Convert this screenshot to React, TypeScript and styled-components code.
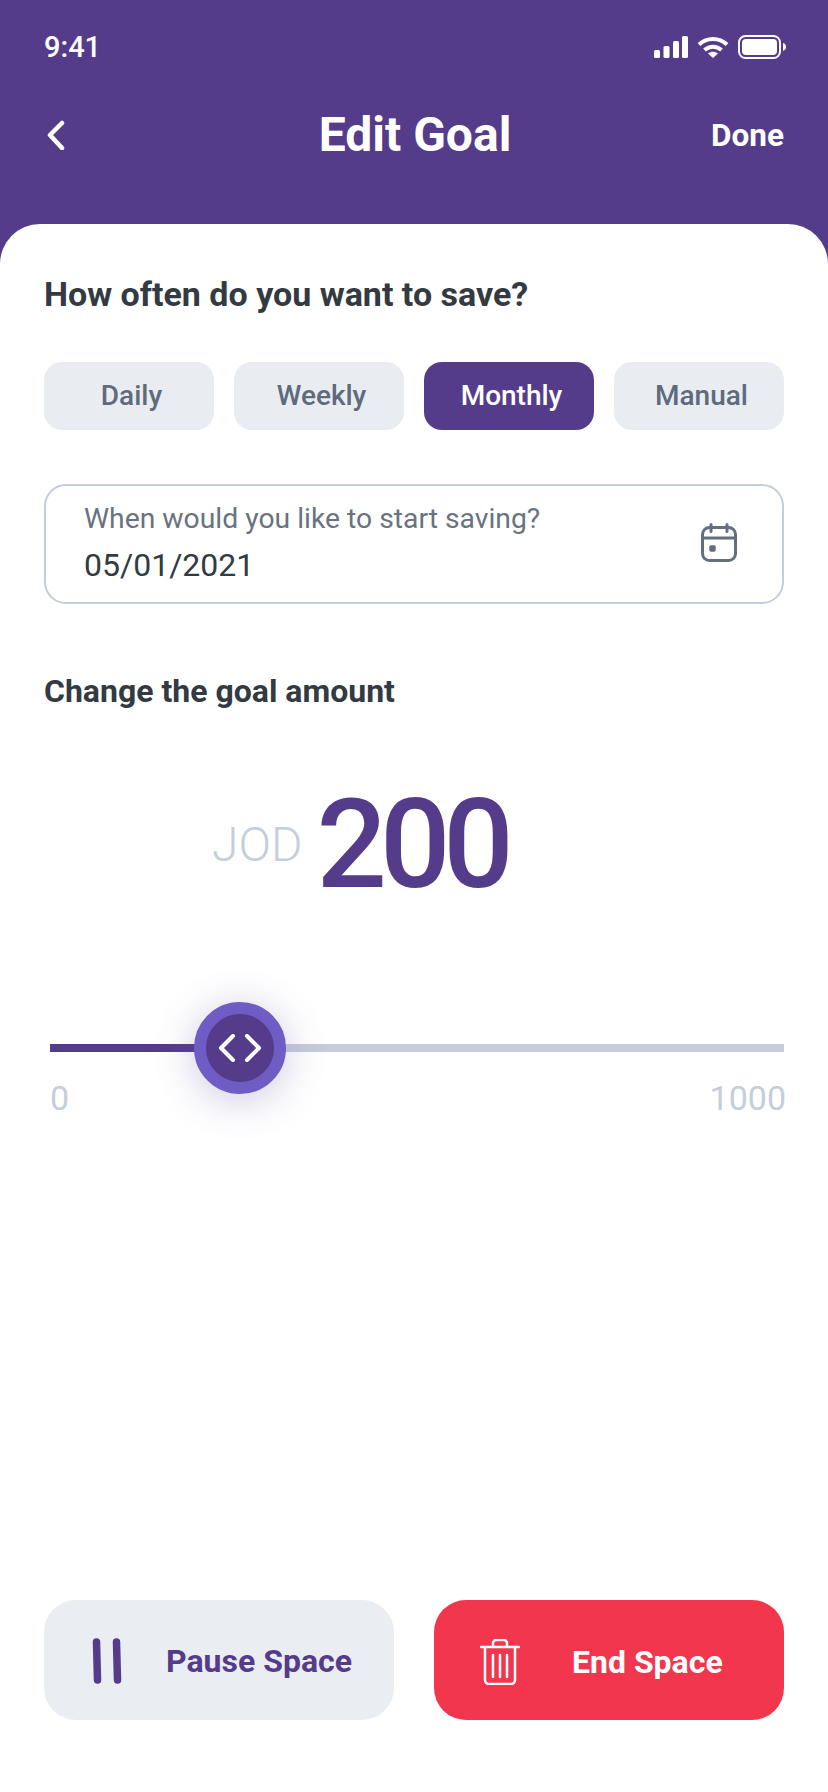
import React from 'react';
import styled, { createGlobalStyle } from 'styled-components';

const GlobalStyle = createGlobalStyle`
  html, body {
    margin: 0;
    padding: 0;
    background: #ffffff;
    font-family: 'Roboto', 'Liberation Sans', sans-serif;
  }
  * { box-sizing: border-box; }
`;

const purple = '#553c8b';

const Page = styled.div`
  width: 828px;
  height: 1792px;
  display: flex;
  flex-direction: column;
  background: ${purple};
  overflow: hidden;
`;

const Header = styled.header`
  height: 224px;
  flex: none;
  padding: 0 44px;
  color: #ffffff;
`;

const StatusBar = styled.div`
  height: 105px;
  padding-top: 28px;
  display: flex;
  justify-content: space-between;
  align-items: flex-start;
`;

const Clock = styled.span`
  font-size: 29px;
  line-height: 38px;
  font-weight: 500;
`;

const StatusIcons = styled.div`
  display: flex;
  align-items: center;
  gap: 9px;
  margin-top: 7px;
  margin-right: -2px;
`;

const NavBar = styled.div`
  display: grid;
  grid-template-columns: 1fr auto 1fr;
  align-items: center;
  height: 60px;
`;

const BackButton = styled.button`
  border: none;
  background: none;
  padding: 0 0 0 2px;
  display: flex;
  justify-self: start;
`;

const Title = styled.h1`
  margin: 0;
  padding-left: 2px;
  font-size: 48px;
  font-weight: 700;
  line-height: 60px;
`;

const DoneButton = styled.button`
  border: none;
  background: none;
  padding: 0;
  color: #ffffff;
  font: 700 31.5px/40px 'Roboto', sans-serif;
  justify-self: end;
  margin-top: 2px;
`;

const Card = styled.main`
  flex: 1;
  background: #ffffff;
  border-radius: 40px 40px 0 0;
  padding: 50px 44px 72px;
  display: flex;
  flex-direction: column;
`;

const SectionTitle = styled.h2`
  margin: 0;
  font-size: 34px;
  line-height: 40px;
  font-weight: 700;
  color: #333a42;
`;

const Pills = styled.div`
  display: grid;
  grid-template-columns: repeat(4, 170px);
  gap: 20px;
  margin-top: 48px;
`;

const Pill = styled.button<{ $active?: boolean }>`
  height: 68px;
  border: none;
  border-radius: 18px;
  padding: 0 0 0 5px;
  font: 500 28px/36px 'Roboto', sans-serif;
  background: ${({ $active }) => ($active ? purple : '#e9edf1')};
  color: ${({ $active }) => ($active ? '#ffffff' : '#606a7d')};
`;

const DateField = styled.div`
  height: 120px;
  margin-top: 54px;
  border: 2px solid #c5cddc;
  border-radius: 22px;
  padding: 0 45px 2px 38px;
  display: flex;
  align-items: center;
  justify-content: space-between;
`;

const DateText = styled.div`
  display: flex;
  flex-direction: column;
  gap: 8px;
`;

const DateLabel = styled.span`
  font-size: 28.3px;
  line-height: 36px;
  color: #69727f;
`;

const DateValue = styled.span`
  font-size: 32px;
  line-height: 40px;
  color: #333a42;
`;

const AmountTitle = styled(SectionTitle)`
  margin-top: 67px;
  font-size: 32px;
`;

const Amount = styled.div`
  display: flex;
  align-items: center;
  gap: 14px;
  margin-top: 64px;
  padding-left: 168px;
`;

const Currency = styled.span`
  font-size: 48px;
  line-height: 60px;
  font-weight: 300;
  color: #c5cddc;
`;

const Value = styled.span`
  font-size: 124px;
  line-height: 140px;
  font-weight: 500;
  letter-spacing: -7px;
  color: ${purple};
`;

const Slider = styled.div`
  margin-top: 129px;
  padding-left: 6px;
`;

const Track = styled.div`
  position: relative;
  height: 8px;
  background: #c5cddc;
`;

const TrackFill = styled.div`
  height: 100%;
  background: ${purple};
`;

const Thumb = styled.div`
  position: absolute;
  top: 50%;
  width: 92px;
  height: 92px;
  margin: -46px 0 0 -46px;
  border-radius: 50%;
  background: ${purple};
  border: 12px solid #6f5cc4;
  box-shadow: 0 6px 40px rgba(96, 88, 160, 0.32);
  display: flex;
  align-items: center;
  justify-content: center;
`;

const SliderLabels = styled.div`
  display: flex;
  justify-content: space-between;
  margin: 26px -2px 0 0;
  font-size: 34px;
  line-height: 40px;
  color: #c5cddc;
`;

const Actions = styled.div`
  margin-top: auto;
  display: grid;
  grid-template-columns: 350px 350px;
  gap: 40px;
`;

const ActionButton = styled.button<{ $danger?: boolean }>`
  height: 120px;
  border: none;
  border-radius: 32px;
  display: flex;
  align-items: center;
  padding: ${({ $danger }) => ($danger ? '4px 0 0 46px' : '2px 0 0 48px')};
  gap: ${({ $danger }) => ($danger ? 52 : 44)}px;
  background: ${({ $danger }) => ($danger ? '#f2364e' : '#eaedf1')};
  color: ${({ $danger }) => ($danger ? '#ffffff' : purple)};
  font: 700 32px/40px 'Roboto', sans-serif;
`;

const thumbPosition = 190;

export default function App() {
  return (
    <Page>
      <GlobalStyle />
      <Header>
        <StatusBar>
          <Clock>9:41</Clock>
          <StatusIcons>
            <svg width="34" height="24" viewBox="0 0 34 24" fill="#fff">
              <rect x="0" y="15" width="6" height="8" rx="1.5" />
              <rect x="9.500" y="11" width="6" height="12" rx="1.5" />
              <rect x="19" y="6" width="6" height="17" rx="1.5" />
              <rect x="28" y="1" width="6" height="22" rx="1.5" />
            </svg>
            <svg width="32" height="24" viewBox="0 0 32 24" fill="none" stroke="#fff" strokeWidth="4">
              <path d="M2 9.500C10 2 22 2 30 9.500" />
              <path d="M7.500 15C12.500 10.500 19.500 10.500 24.500 15" />
              <path d="M11 18.500L16 23l5-4.500C18 16 14 16 11 18.500Z" fill="#fff" stroke="none" />
            </svg>
            <svg width="48" height="24" viewBox="0 0 48 24">
              <rect x="1" y="1" width="41" height="22" rx="6.5" fill="none" stroke="#fff" strokeWidth="2" />
              <rect x="4" y="4" width="35" height="16" rx="4" fill="#fff" />
              <path d="M45 8c2 .6 3 2.200 3 4s-1 3.400-3 4Z" fill="#fff" />
            </svg>
          </StatusIcons>
        </StatusBar>
        <NavBar>
          <BackButton>
            <svg width="20" height="30" viewBox="0 0 20 30" fill="none" stroke="#fff" strokeWidth="4.500" strokeLinecap="round" strokeLinejoin="round">
              <path d="M16 3L4 15l12 13" />
            </svg>
          </BackButton>
          <Title>Edit Goal</Title>
          <DoneButton>Done</DoneButton>
        </NavBar>
      </Header>
      <Card>
        <SectionTitle>How often do you want to save?</SectionTitle>
        <Pills>
          <Pill>Daily</Pill>
          <Pill>Weekly</Pill>
          <Pill $active>Monthly</Pill>
          <Pill>Manual</Pill>
        </Pills>
        <DateField>
          <DateText>
            <DateLabel>When would you like to start saving?</DateLabel>
            <DateValue>05/01/2021</DateValue>
          </DateText>
          <svg width="36" height="40" viewBox="0 0 36 40" fill="none" stroke="#646e7f" strokeWidth="3" strokeLinecap="round">
            <rect x="1.500" y="4.500" width="33" height="33" rx="7" />
            <path d="M1.500 15h33M10 1.500v7M26 1.500v7" />
            <rect x="9" y="23" width="5" height="5" rx="1" fill="#646e7f" strokeWidth="1.500" />
          </svg>
        </DateField>
        <AmountTitle>Change the goal amount</AmountTitle>
        <Amount>
          <Currency>JOD</Currency>
          <Value>200</Value>
        </Amount>
        <Slider>
          <Track>
            <TrackFill style={{ width: thumbPosition }} />
            <Thumb style={{ left: thumbPosition }}>
              <svg width="42" height="28" viewBox="0 0 42 28" fill="none" stroke="#fff" strokeWidth="4" strokeLinecap="round" strokeLinejoin="round">
                <path d="M14 2L2 14l12 12M28 2l12 12-12 12" />
              </svg>
            </Thumb>
          </Track>
          <SliderLabels>
            <span>0</span>
            <span>1000</span>
          </SliderLabels>
        </Slider>
        <Actions>
          <ActionButton>
            <svg width="30" height="46" viewBox="0 0 30 46" fill="none" stroke={purple} strokeWidth="7.500" strokeLinecap="round">
              <path d="M4.500 4l1 38M24.500 4l1 38" />
            </svg>
            Pause Space
          </ActionButton>
          <ActionButton $danger>
            <svg width="40" height="46" viewBox="0 0 40 46" fill="none" stroke="#fff" strokeWidth="2.500" strokeLinecap="round" strokeLinejoin="round">
              <path d="M1 8h38M13 8V4a3 3 0 0 1 3-3h8a3 3 0 0 1 3 3v4" />
              <path d="M5 8v33a4 4 0 0 0 4 4h22a4 4 0 0 0 4-4V8" />
              <path d="M13 16v22M20 16v22M27 16v22" />
            </svg>
            End Space
          </ActionButton>
        </Actions>
      </Card>
    </Page>
  );
}
